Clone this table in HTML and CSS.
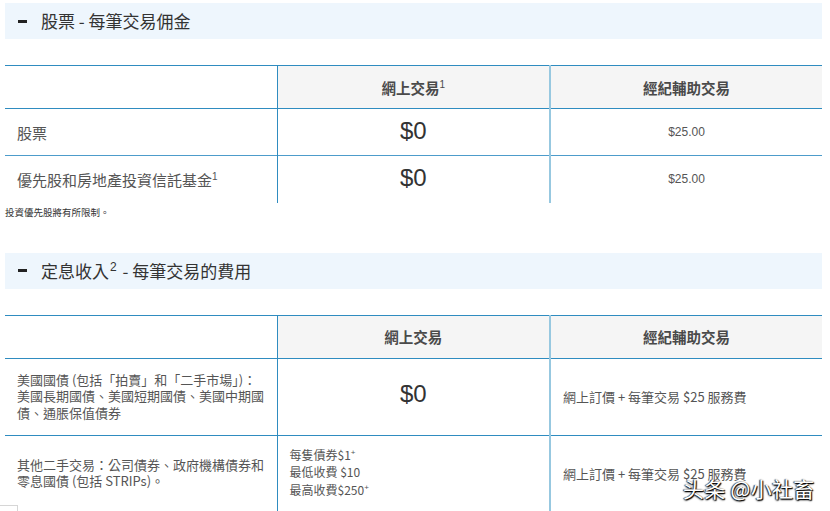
FILE: index.html
```html
<!DOCTYPE html>
<html lang="zh-Hant">
<head>
<meta charset="utf-8">
<link rel="stylesheet" href="styles.css">
</head>
<body>
<div class="page">
  <div class="sec-head"><span class="dash"></span><span class="sec-title">股票 - 每筆交易佣金</span></div>
  <table class="fees t1">
    <colgroup><col class="c1"><col class="c2"><col class="c3"></colgroup>
    <thead>
      <tr><th class="blank"></th><th>網上交易<sup>1</sup></th><th class="last">經紀輔助交易</th></tr>
    </thead>
    <tbody>
      <tr><td class="label big">股票</td><td class="zero">$0</td><td class="price last">$25.00</td></tr>
      <tr><td class="label big">優先股和房地產投資信託基金<sup>1</sup></td><td class="zero">$0</td><td class="price last">$25.00</td></tr>
    </tbody>
  </table>
  <p class="note">投資優先股將有所限制。</p>

  <div class="sec-head second"><span class="dash"></span><span class="sec-title">定息收入<sup class="sup2">2</sup> - 每筆交易的費用</span></div>
  <table class="fees t2">
    <colgroup><col class="c1"><col class="c2"><col class="c3"></colgroup>
    <thead>
      <tr><th class="blank"></th><th>網上交易</th><th class="last">經紀輔助交易</th></tr>
    </thead>
    <tbody>
      <tr class="r1"><td class="label small">美國國債 (包括「拍賣」和「二手市場」)：美國長期國債、美國短期國債、美國中期國債、通脹保值債券</td><td class="zero z2">$0</td><td class="desc last">網上訂價 + 每筆交易 $25 服務費</td></tr>
      <tr class="r2"><td class="label small">其他二手交易：公司債券、政府機構債券和零息國債 (包括 STRIPs)。</td><td class="desc lines"><div>每隻債券$1<sup>+</sup></div><div>最低收費 $10</div><div>最高收費$250<sup>+</sup></div></td><td class="desc last">網上訂價 + 每筆交易 $25 服務費</td></tr>
    </tbody>
  </table>
</div>
<div class="corner-box"></div>
<div class="watermark">头条 @小社畜</div>
</body>
</html>
```

FILE: styles.css
```css
html, body {
  margin: 0;
  padding: 0;
  background: #ffffff;
}
body {
  font-family: "Noto Sans CJK TC", "Liberation Sans", sans-serif;
  color: #444;
  width: 830px;
  height: 511px;
  overflow: hidden;
  position: relative;
}
.page {
  padding: 3px 8px 0 5px;
}
.sec-head {
  height: 36px;
  background: #eef6fd;
  display: flex;
  align-items: center;
  padding-left: 13px;
}
.sec-head.second {
  margin-top: 34px;
}
.dash {
  display: inline-block;
  width: 9px;
  height: 3px;
  background: #222;
  margin-right: 14px;
}
.sec-title {
  font-size: 17px;
  color: #333;
  line-height: 20px;
}
.sup2 {
  font-family: "Liberation Sans", sans-serif;
  font-size: 12px;
  vertical-align: 7px;
  line-height: 0;
  margin: 0 2px 0 1px;
}
.fees {
  width: 817px;
  border-collapse: collapse;
  table-layout: fixed;
  margin-top: 26px;
  border-top: 1px solid #2f8cc0;
}
.fees col.c1 { width: 272px; }
.fees col.c2 { width: 273px; }
.fees col.c3 { width: 272px; }
.fees th {
  height: 42px;
  padding: 0;
  background: #f5f5f5;
  font-size: 14.5px;
  font-weight: bold;
  color: #4a4a4a;
  border-bottom: 1px solid #2f8cc0;
  border-left: 1px solid #2f8cc0;
  text-align: center;
  vertical-align: middle;
}
.fees th.blank {
  background: #fff;
  border-left: none;
}
.fees th.last, .fees td.last {
  border-left: 2px solid #97c8e0;
}
.fees th sup, .fees td sup {
  font-family: "Liberation Sans", sans-serif;
  font-size: 10px;
  font-weight: normal;
  line-height: 0;
  vertical-align: 6px;
}
.fees td {
  padding: 0;
  border-left: 1px solid #2f8cc0;
  vertical-align: middle;
}
.fees td.label {
  border-left: none;
  padding-left: 12px;
}
.t1 tbody tr {
  height: 47px;
}
.t1 tbody tr + tr td {
  border-top: 1px solid #4d9ccb;
}
.label.big {
  font-size: 15px;
  color: #555;
}
.zero {
  text-align: center;
  font-family: "Liberation Sans", sans-serif;
  font-size: 24px;
  color: #333;
  padding-bottom: 2px !important;
}
.zero.z2 {
  padding-bottom: 6px !important;
}
.price {
  text-align: center;
  font-family: "Liberation Sans", sans-serif;
  font-size: 12px;
  color: #555;
}
.note {
  margin: 2px 0 0 0;
  font-size: 9.5px;
  line-height: 14px;
  color: #333;
}
.fees.t2 {
  margin-top: 26px;
}
.t2 .r1 { height: 77px; }
.t2 .r2 { height: 76px; }
.t2 tbody tr + tr td {
  border-top: 1px solid #2f8cc0;
}
.label.small {
  font-size: 13px;
  line-height: 16.5px;
  color: #555;
  padding-right: 11px;
}
.desc {
  font-size: 13px;
  color: #555;
  padding-left: 12px !important;
  line-height: 17px;
}
.desc.lines {
  font-size: 12px;
  line-height: 17.5px;
  padding-bottom: 3px !important;
}
.desc sup {
  font-size: 8px !important;
  vertical-align: 5px !important;
}
.corner-box {
  position: absolute;
  left: 0;
  top: 505px;
  width: 17px;
  height: 10px;
  border: 1px solid #d6d6d6;
  border-left: none;
  background: #fff;
}
.watermark {
  position: absolute;
  left: 683px;
  top: 473px;
  font-family: "Noto Sans CJK SC", sans-serif;
  font-size: 21px;
  color: #ffffff;
  letter-spacing: 0.3px;
  text-shadow: 1px 1px 1px #000, -1px 0 1px #333, 0 1px 2px #000;
}
```
